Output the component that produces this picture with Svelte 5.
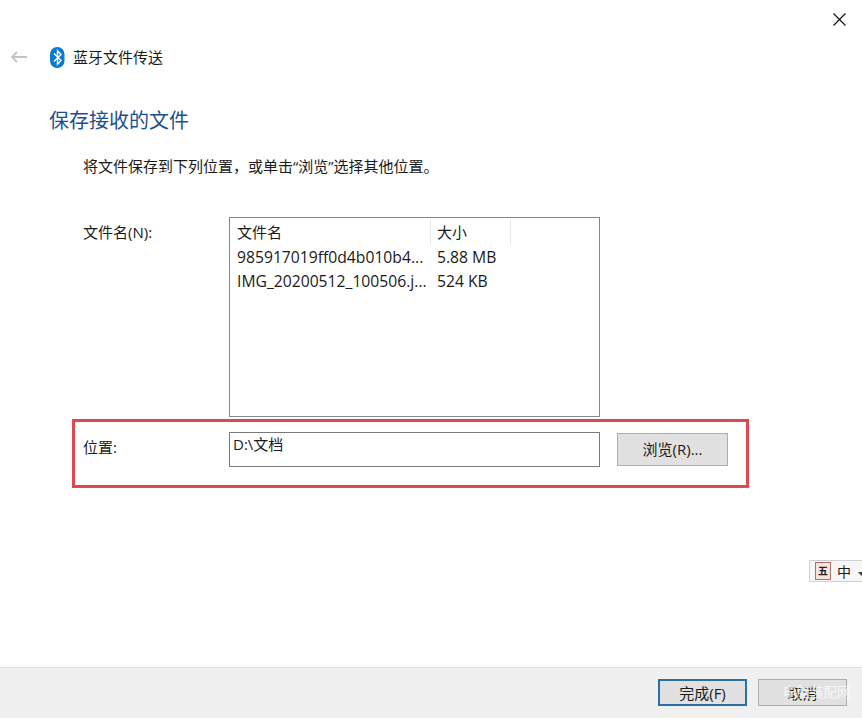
<script>
  const files = [
    { name: '985917019ff0d4b010b4...', size: '5.88 MB' },
    { name: 'IMG_20200512_100506.j...', size: '524 KB' }
  ];
</script>

<div class="wizard">
  <div class="close-row">
    <button class="close" aria-label="关闭">
      <svg width="13" height="13" viewBox="0 0 13 13"><path d="M.5.5l12 12M12.5.5l-12 12" stroke="#111" stroke-width="1.2" fill="none" /></svg>
    </button>
  </div>

  <div class="nav">
    <svg class="back" width="16" height="12" viewBox="0 0 16 12"><path d="M6 1L1 6l5 5M1 6h15" stroke="#c4c4c4" stroke-width="1.8" fill="none" /></svg>
    <svg class="bt" width="15" height="21" viewBox="0 0 15 21">
      <rect x="0" y="0" width="14.5" height="21" rx="7.2" fill="#0b7ad1" />
      <path d="M4 6.5l7 7-3.5 3.7V3.8L11 7.5l-7 7" stroke="#fff" stroke-width="1.4" fill="none" />
    </svg>
    <span class="nav-title">蓝牙文件传送</span>
  </div>

  <h1>保存接收的文件</h1>
  <p class="intro">将文件保存到下列位置，或单击“浏览”选择其他位置。</p>

  <div class="files-row">
    <span class="label">文件名(N):</span>
    <div class="list">
      <div class="list-head">
        <span class="col-name">文件名</span>
        <span class="col-size">大小</span>
      </div>
      {#each files as f}
        <div class="list-item">
          <span class="col-name">{f.name}</span>
          <span class="col-size">{f.size}</span>
        </div>
      {/each}
    </div>
  </div>

  <div class="location">
    <span class="label">位置:</span>
    <div class="path">D:\文档</div>
    <button class="btn browse">浏览(R)...</button>
  </div>

  <div class="footer">
    <button class="btn primary">完成(F)</button>
    <button class="btn cancel">取消</button>
  </div>

  <div class="ime">
    <span class="ime-mark">五</span>
    <span class="ime-lang">中</span>
    <svg class="ime-caret" width="7" height="4" viewBox="0 0 7 4"><path d="M0 0h7L3.5 4z" fill="#444" /></svg>
  </div>
  <div class="watermark">电脑装配网</div>
</div>

<style>
  :global(body) {
    margin: 0;
    background: #fff;
  }

  .wizard {
    position: relative;
    width: 862px;
    height: 719px;
    overflow: hidden;
    display: flex;
    flex-direction: column;
    background: #fff;
    color: #1a1a1a;
    font-family: "Open Sans", "Noto Sans CJK SC", sans-serif;
    font-size: 15.7px;
  }

  .close-row {
    display: flex;
    justify-content: flex-end;
    padding: 13px 16px 0 0;
    height: 21px;
  }

  .close {
    width: 13px;
    height: 13px;
    padding: 0;
    border: none;
    background: none;
    line-height: 0;
  }

  .nav {
    display: flex;
    align-items: center;
    height: 21px;
    margin-top: 13px;
    padding-left: 11px;
  }

  .back {
    margin: 0 23px 2px 0;
  }

  .bt {
    margin-right: 8px;
  }

  .nav-title {
    font-size: 15px;
    padding-bottom: 3px;
  }

  h1 {
    margin: 39px 0 0 49px;
    font-size: 20px;
    line-height: 28px;
    font-weight: 400;
    color: #1d4f91;
  }

  .intro {
    margin: 19px 0 0 83px;
    font-size: 15px;
    line-height: 24px;
  }

  .files-row {
    display: flex;
    margin: 39px 0 0 83px;
  }

  .label {
    flex: none;
    width: 146px;
    font-size: 15px;
    line-height: 30px;
  }

  .list {
    box-sizing: border-box;
    width: 371px;
    height: 200px;
    border: 1px solid #828790;
    padding-top: 1px;
  }

  .list-item {
    display: flex;
    height: 24px;
    line-height: 24px;
  }

  .list-head {
    display: flex;
    height: 26px;
    line-height: 26px;
    font-size: 15px;
  }

  .col-name {
    box-sizing: border-box;
    width: 201px;
    padding-left: 7px;
    white-space: nowrap;
  }

  .col-size {
    box-sizing: border-box;
    width: 80px;
    padding-left: 6px;
    white-space: nowrap;
  }

  .list-head .col-name,
  .list-head .col-size {
    border-right: 1px solid #e8e8e8;
  }

  .location {
    box-sizing: border-box;
    display: flex;
    align-items: center;
    width: 677px;
    height: 69px;
    margin: 2px 0 0 72px;
    padding: 0 0 8px 8px;
    border: 3px solid #dc4a50;
  }

  .path {
    box-sizing: border-box;
    width: 371px;
    height: 35px;
    padding: 1px 3px;
    border: 1px solid #7a7a7a;
    line-height: 20px;
    font-size: 15px;
  }

  .location .label {
    line-height: 24px;
    padding-bottom: 5px;
  }

  .btn {
    box-sizing: border-box;
    padding: 0;
    border: 1px solid #adadad;
    background: #e1e1e1;
    color: #1a1a1a;
    font-family: inherit;
    font-size: 15px;
  }

  .browse {
    width: 111px;
    height: 33px;
    margin-left: 17px;
    padding-bottom: 2px;
  }

  .footer {
    box-sizing: border-box;
    display: flex;
    justify-content: flex-end;
    gap: 11px;
    height: 51px;
    margin-top: auto;
    margin-bottom: 1px;
    padding: 11px 15px 0 0;
    background: #f0f0f0;
    border-top: 1px solid #dfdfdf;
  }

  .footer .btn {
    width: 89px;
    height: 27px;
  }

  .primary {
    border: 2px solid #2a6fa8;
  }

  .ime {
    position: absolute;
    left: 809px;
    top: 560px;
    box-sizing: border-box;
    width: 60px;
    height: 22px;
    display: flex;
    align-items: center;
    padding-left: 5px;
    background: #f6f6f6;
    border: 1px solid #d2d2d2;
    font-size: 14px;
  }

  .ime-mark {
    box-sizing: border-box;
    width: 16px;
    height: 18px;
    margin-right: 6px;
    border: 1px solid #b0706a;
    background: #f6e4de;
    color: #222;
    font-size: 10px;
    font-weight: 700;
    line-height: 16px;
    text-align: center;
  }

  .ime-caret {
    margin: 5px 0 0 7px;
  }

  .watermark {
    position: absolute;
    left: 783px;
    top: 683px;
    color: rgba(255, 255, 255, 0.75);
    font-size: 13.5px;
    line-height: 18px;
  }
</style>
